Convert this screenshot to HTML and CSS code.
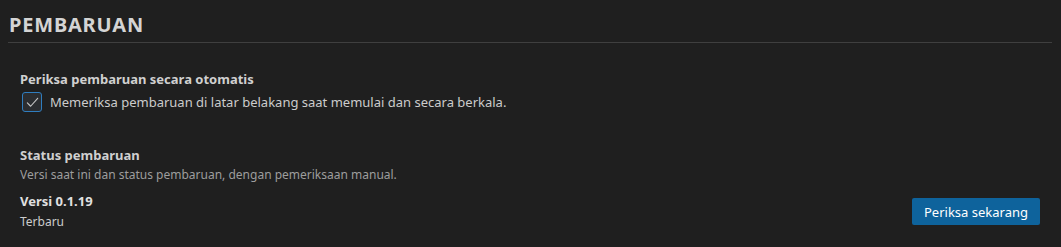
FILE: index.html
```html
<!DOCTYPE html>
<html lang="id">
<head>
  <meta charset="UTF-8" />
  <meta name="viewport" content="width=device-width, initial-scale=1" />
  <title>Pengaturan - Pembaruan</title>
  <link rel="stylesheet" href="styles.css">
</head>
<body>

  <section class="settings-section" aria-labelledby="judulPembaruan">
    <h2 class="section-title" id="judulPembaruan">PEMBARUAN</h2>

    <div class="setting-item">
      <div class="setting-label">Periksa pembaruan secara otomatis</div>
      <label class="checkbox-row">
        <span class="checkbox" role="checkbox" aria-checked="true" tabindex="0">
          <svg viewBox="0 0 16 16" width="15" height="15" aria-hidden="true">
            <path d="M2.5 8.5 L6 12 L13.5 3.5" fill="none" stroke="#c5c5c5" stroke-width="1.2" stroke-linecap="round" stroke-linejoin="round"/>
          </svg>
        </span>
        <span class="checkbox-text">Memeriksa pembaruan di latar belakang saat memulai dan secara berkala.</span>
      </label>
    </div>

    <div class="setting-item status">
      <div class="setting-label">Status pembaruan</div>
      <div class="setting-desc">Versi saat ini dan status pembaruan, dengan pemeriksaan manual.</div>
      <div class="status-row">
        <div class="versi-info">
          <div class="versi">Versi 0.1.19</div>
          <div class="versi-status">Terbaru</div>
        </div>
        <button class="btn-primary" type="button">Periksa sekarang</button>
      </div>
    </div>
  </section>

</body>
</html>
```

FILE: styles.css
```css
/* Reset e base */
*, *::before, *::after {
  box-sizing: border-box;
}

body, html {
  margin: 0; padding: 0;
  background: #1f1f1f;
  font-family: 'Noto Sans', 'Open Sans', sans-serif;
  color: #cccccc;
  overflow: hidden;
}

.settings-section {
  padding: 0 9px 0 8px;
}

/* Judul seksi */
.section-title {
  margin: 0;
  padding: 11px 0 4px 1px;
  font-size: 20px;
  line-height: 27px;
  font-weight: 700;
  letter-spacing: 0.8px;
  color: #d4d4d4;
  border-bottom: 1px solid #3f3f3f;
}

.setting-item { padding: 0 12px; }
.setting-item:first-of-type { margin-top: 27px; }

.setting-label { font-size: 13px; line-height: 18px; font-weight: 700; color: #d0d0d0; }

.checkbox-row { display: flex; align-items: center; gap: 8px; margin-top: 4px; padding-left: 2px; }
.checkbox { width: 20px; height: 20px; border: 1px solid #2f7dbf; border-radius: 3px; background: #2b2d30; display: flex; align-items: center; justify-content: center; }
.checkbox-text { font-size: 13px; line-height: 18px; color: #cccccc; }

.status { margin-top: 34px; }
.setting-desc { margin-top: 2px; font-size: 12px; line-height: 18px; color: #9d9d9d; }

.status-row { display: flex; align-items: center; justify-content: space-between; margin-top: 8px; }
.versi { font-size: 13px; line-height: 18px; font-weight: 700; color: #e0e0e0; }
.versi-status { margin-top: 3px; font-size: 12px; line-height: 18px; color: #cccccc; }

.btn-primary {
  background: #0e639c;
  border: none;
  border-radius: 2px;
  color: #ffffff;
  font-family: inherit;
  font-size: 13px;
  line-height: 18px;
  padding: 5px 12px 4px;
  white-space: nowrap;
  cursor: pointer;
}
.btn-primary:hover { background: #1177bb; }
```
